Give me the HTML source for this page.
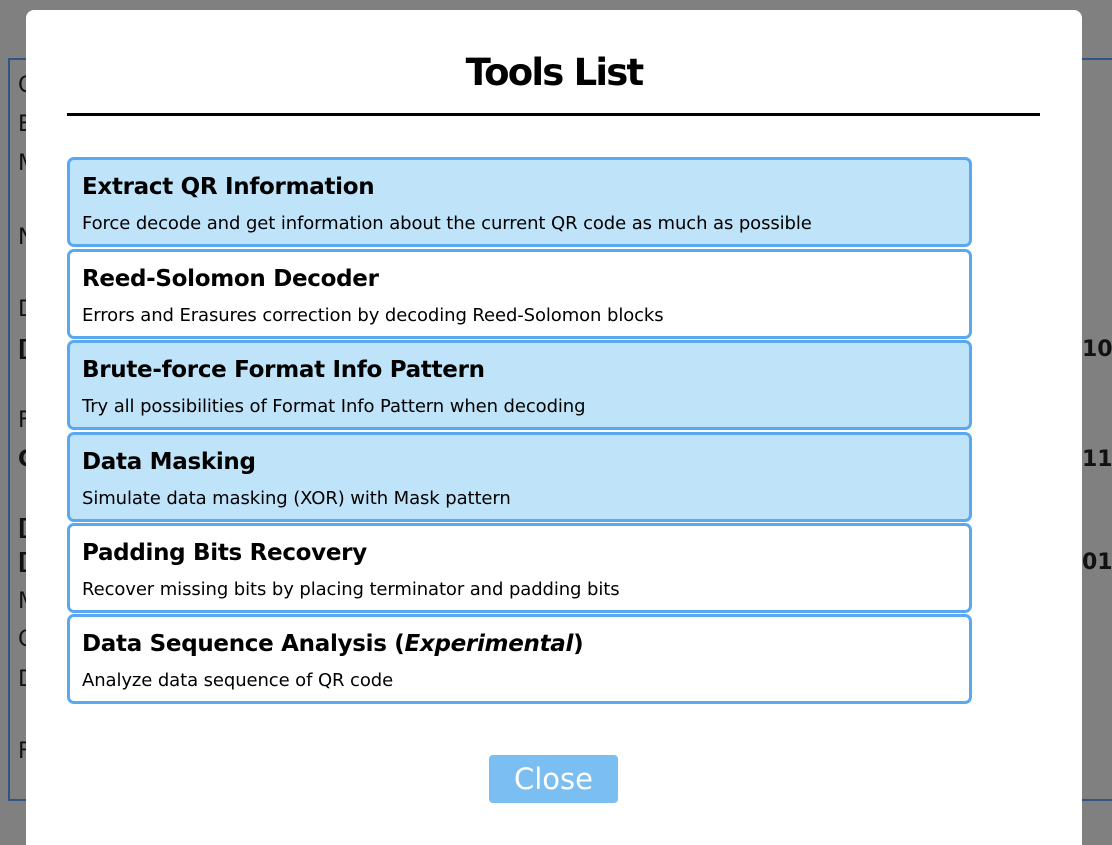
<!DOCTYPE html>
<html><head><meta charset="utf-8"><style>
*{margin:0;padding:0;box-sizing:border-box}
html,body{width:1112px;height:845px;overflow:hidden;background:#808080;font-family:"DejaVu Sans","Liberation Sans",sans-serif;position:relative}
.bgbox{position:absolute;left:8px;top:58px;width:1200px;height:743px;border:2px solid #2f5580}
.bt{position:absolute;left:18px;font-size:22px;color:#111;line-height:1}
.rt{position:absolute;left:1082px;font-size:22px;font-weight:bold;color:#111;line-height:1}
.modal{position:absolute;left:26px;top:10px;width:1056px;height:850px;background:#fff;border-radius:8px}
h1{position:absolute;left:0;width:100%;top:44px;text-align:center;font-size:37px;font-weight:bold;letter-spacing:-1.8px;line-height:1}
.hr{position:absolute;left:41px;top:103px;width:973px;height:3px;background:#000}
.card{position:absolute;left:41px;width:905px;height:90px;border:3px solid #5aa9f0;border-radius:7px;background:#fff;padding-left:13px}
.card.b{background:#bfe3f8}
.card .t{position:absolute;left:12px;top:16px;font-size:23px;font-weight:bold;letter-spacing:-0.3px;line-height:1;white-space:nowrap}
.card .s{position:absolute;left:12px;top:55px;font-size:18px;letter-spacing:-0.1px;line-height:1;white-space:nowrap}
.btn{position:absolute;left:463px;top:745px;width:129px;height:48px;background:#7bbff2;border-radius:4px;color:#fff;font-size:29px;text-align:center;line-height:48px}
</style></head><body>
<div class="bgbox"></div>
<div class="bt" style="top:75px">C</div>
<div class="bt" style="top:114px">E</div>
<div class="bt" style="top:153px">M</div>
<div class="bt" style="top:227px">N</div>
<div class="bt" style="top:299px">D</div>
<div class="bt" style="top:339px;font-weight:bold">[</div>
<div class="bt" style="top:410px">F</div>
<div class="bt" style="top:449px;font-weight:bold">C</div>
<div class="bt" style="top:518px;font-weight:bold">[</div>
<div class="bt" style="top:552px;font-weight:bold">[</div>
<div class="bt" style="top:591px">M</div>
<div class="bt" style="top:629px">C</div>
<div class="bt" style="top:669px">D</div>
<div class="bt" style="top:741px">F</div>
<div class="rt" style="top:339px">100</div>
<div class="rt" style="top:449px">111</div>
<div class="rt" style="top:552px">011</div>
<div class="modal">
<h1>Tools List</h1>
<div class="hr"></div>
<div class="card b" style="top:147px"><div class="t">Extract QR Information</div><div class="s">Force decode and get information about the current QR code as much as possible</div></div>
<div class="card" style="top:239px"><div class="t">Reed-Solomon Decoder</div><div class="s">Errors and Erasures correction by decoding Reed-Solomon blocks</div></div>
<div class="card b" style="top:330px"><div class="t">Brute-force Format Info Pattern</div><div class="s">Try all possibilities of Format Info Pattern when decoding</div></div>
<div class="card b" style="top:422px"><div class="t">Data Masking</div><div class="s">Simulate data masking (XOR) with Mask pattern</div></div>
<div class="card" style="top:513px"><div class="t">Padding Bits Recovery</div><div class="s">Recover missing bits by placing terminator and padding bits</div></div>
<div class="card" style="top:604px"><div class="t">Data Sequence Analysis (<i>Experimental</i>)</div><div class="s">Analyze data sequence of QR code</div></div>
<div class="btn">Close</div>
</div>
</body></html>
